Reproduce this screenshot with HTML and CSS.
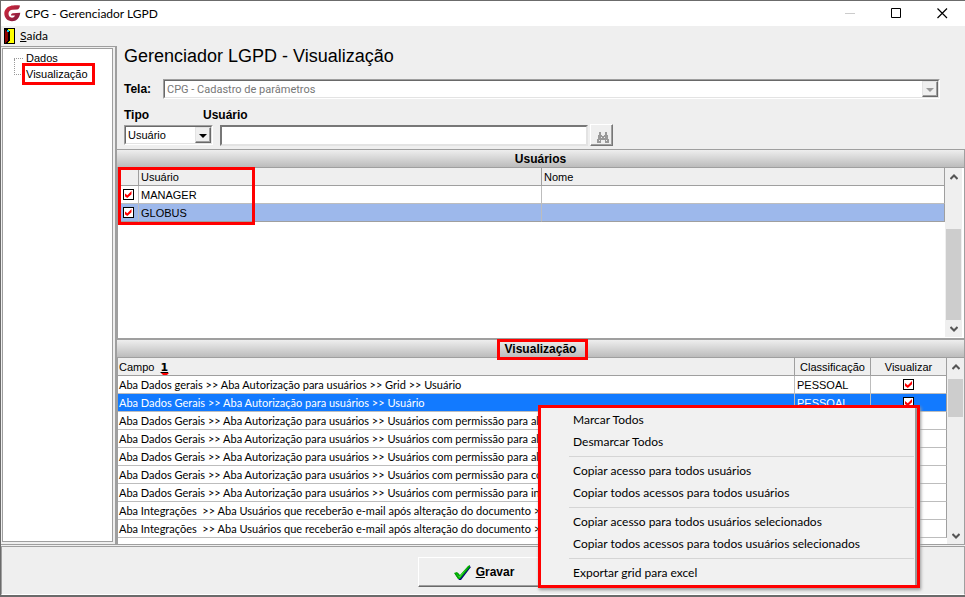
FILE: index.html
```html
<!DOCTYPE html>
<html lang="pt-BR">
<head>
<meta charset="utf-8">
<title>CPG - Gerenciador LGPD</title>
<link rel="stylesheet" href="styles.css">
</head>
<body>
<div class="window">
  <header class="titlebar">
    <svg class="logo" viewBox="0 0 17 17" aria-hidden="true">
      <defs><linearGradient id="lg" x1="0" y1="0" x2="1" y2="1"><stop offset="0" stop-color="#d8283c"/><stop offset="1" stop-color="#7c1c40"/></linearGradient></defs>
      <path fill="url(#lg)" d="M16 .5C13 .2 9 .2 6.500 .9C2.500 1.900 .3 5 .3 8.600C.3 13 3.500 16.300 8 16.300C12.500 16.300 15.600 13 16.300 7.800L8.800 8.200C7.600 8.400 7 9.400 6.900 10.600L11 10.500C10.300 12 9.300 12.700 8 12.700C5.800 12.700 4.500 11 4.500 8.800C4.500 6.300 6 4.800 8.600 4.700L13 4.600C14.800 4.300 15.700 2.700 16 .5Z"/>
    </svg>
    <h1 class="caption">CPG - Gerenciador LGPD</h1>
    <div class="controls">
      <button class="ctl" aria-label="Minimizar" disabled><svg viewBox="0 0 11 11"><path d="M0 5.500H10" stroke="#ccc"/></svg></button>
      <button class="ctl" aria-label="Maximizar"><svg viewBox="0 0 11 11"><path d="M1 1H10V10H1Z" transform="translate(-.5 -.5)" fill="none" stroke="#000"/></svg></button>
      <button class="ctl" aria-label="Fechar"><svg viewBox="0 0 11 11"><path d="M.5 .5L10 10M10 .5L.5 10" stroke="#000" stroke-width="1.200"/></svg></button>
    </div>
  </header>
  <nav class="menubar">
    <button class="exit">
      <svg class="door" viewBox="0 0 11 16" shape-rendering="crispEdges" aria-hidden="true"><path fill="#000" d="M0 0H11V16H0Z"/><path fill="#ff0" d="M3 1H10V15H3Z"/><path fill="#000" d="M1 1H3L6 4V12L3 16H1Z"/><path fill="#900000" d="M1 2L4 4V12L2 15H1Z"/><path fill="#0cf" d="M3 2H5V4H3Z"/></svg>
      <span><u>S</u>aída</span>
    </button>
  </nav>
  <div class="body">
    <aside class="side">
      <ul class="tree">
        <li><a href="#dados">Dados</a></li>
        <li><a class="marked" href="#visualizacao">Visualização</a></li>
      </ul>
    </aside>
    <main class="main">
      <section class="filters">
        <h2 class="heading">Gerenciador LGPD - Visualização</h2>
        <div class="row">
          <label class="lbl" for="tela">Tela:</label>
          <div class="combo wide">
            <select id="tela" disabled><option>CPG - Cadastro de parâmetros</option></select>
            <span class="drop"></span>
          </div>
        </div>
        <div class="fields">
          <label class="lbl" for="tipo">Tipo</label>
          <label class="lbl second" for="usuario">Usuário</label>
          <div class="combo">
            <select id="tipo"><option>Usuário</option></select>
            <span class="drop"></span>
          </div>
          <div class="search">
            <input id="usuario" type="text">
            <button class="find" aria-label="Pesquisar"><svg viewBox="0 0 12 12" shape-rendering="crispEdges"><path fill="#999" d="M2 0H4V3H5V4H7V3H8V0H10V3H11V7H12V11H8V8H4V11H0V7H1V3H2Z"/><path fill="#efefef" d="M2 8H3V9H2ZM9 8H10V9H9ZM4 5H5V6H4ZM7 5H8V6H7Z"/></svg></button>
          </div>
        </div>
      </section>
      <h3 class="band">Usuários</h3>
      <section class="pane users">
        <div class="view">
          <table class="grid">
            <colgroup><col class="c-check"><col class="c-user"><col></colgroup>
            <thead><tr><th></th><th>Usuário</th><th>Nome</th></tr></thead>
            <tbody>
              <tr><td class="mid"><input type="checkbox" aria-label="MANAGER" checked></td><td>MANAGER</td><td></td></tr>
              <tr class="soft"><td class="mid"><input type="checkbox" aria-label="GLOBUS" checked></td><td>GLOBUS</td><td></td></tr>
            </tbody>
          </table>
        </div>
        <div class="bar"><svg class="arr" viewBox="0 0 8 6"><path d="M.5 5L4 1.500L7.500 5"/></svg><span class="thumb low"></span><svg class="arr" viewBox="0 0 8 6"><path d="M.5 1L4 4.500L7.500 1"/></svg></div>
        <div class="frame"></div>
      </section>
      <h3 class="band"><span class="marked">Visualização</span></h3>
      <section class="pane access">
        <div class="view">
          <table class="grid">
            <colgroup><col><col class="c-class"><col class="c-class"></colgroup>
            <thead><tr><th>Campo <span class="sort">1</span></th><th class="mid">Classificação</th><th class="mid">Visualizar</th></tr></thead>
            <tbody>
              <tr><td>Aba Dados gerais &gt;&gt; Aba Autorização para usuários &gt;&gt; Grid &gt;&gt; Usuário</td><td>PESSOAL</td><td class="mid"><input type="checkbox" aria-label="Visualizar" checked></td></tr>
              <tr class="active"><td>Aba Dados Gerais &gt;&gt; Aba Autorização para usuários &gt;&gt; Usuário</td><td>PESSOAL</td><td class="mid"><input type="checkbox" aria-label="Visualizar" checked></td></tr>
              <tr><td>Aba Dados Gerais &gt;&gt; Aba Autorização para usuários &gt;&gt; Usuários com permissão para alt</td><td></td><td></td></tr>
              <tr><td>Aba Dados Gerais &gt;&gt; Aba Autorização para usuários &gt;&gt; Usuários com permissão para alt</td><td></td><td></td></tr>
              <tr><td>Aba Dados Gerais &gt;&gt; Aba Autorização para usuários &gt;&gt; Usuários com permissão para alt</td><td></td><td></td></tr>
              <tr><td>Aba Dados Gerais &gt;&gt; Aba Autorização para usuários &gt;&gt; Usuários com permissão para co</td><td></td><td></td></tr>
              <tr><td>Aba Dados Gerais &gt;&gt; Aba Autorização para usuários &gt;&gt; Usuários com permissão para inc</td><td></td><td></td></tr>
              <tr><td>Aba Integrações &nbsp;&gt;&gt; Aba Usuários que receberão e-mail após alteração do documento &gt;&gt;</td><td></td><td></td></tr>
              <tr><td>Aba Integrações &nbsp;&gt;&gt; Aba Usuários que receberão e-mail após alteração do documento &gt;&gt;</td><td></td><td></td></tr>
            </tbody>
          </table>
        </div>
        <div class="bar"><svg class="arr" viewBox="0 0 8 6"><path d="M.5 5L4 1.500L7.500 5"/></svg><span class="thumb"></span><svg class="arr" viewBox="0 0 8 6"><path d="M.5 1L4 4.500L7.500 1"/></svg></div>
      </section>
    </main>
  </div>
  <footer class="footer">
    <button class="save">
      <svg viewBox="0 0 17 16" aria-hidden="true"><path fill="#000080" d="M1 9L4 8L6 11L15 1L17 2L7 15H5Z"/><path fill="#00a800" d="M0 8L3 7L6 10L14 1L16 0V2L6 14H4Z"/><path fill="#3fdc3f" d="M2 8L5 11.500L14 2L6 12.500H5Z"/></svg>
      <span><u>G</u>ravar</span>
    </button>
  </footer>
  <div class="popup" role="menu">
    <button role="menuitem">Marcar Todos</button>
    <button role="menuitem">Desmarcar Todos</button>
    <hr>
    <button role="menuitem">Copiar acesso para todos usuários</button>
    <button role="menuitem">Copiar todos acessos para todos usuários</button>
    <hr>
    <button role="menuitem">Copiar acesso para todos usuários selecionados</button>
    <button role="menuitem">Copiar todos acessos para todos usuários selecionados</button>
    <hr>
    <button role="menuitem">Exportar grid para excel</button>
  </div>
</div>
</body>
</html>
```
FILE: styles.css
```css
* { box-sizing: border-box; }
body {
  margin: 0;
  font: 11px/17px "Liberation Sans", Arial, sans-serif;
  color: #000;
  background: #efefef;
}
h1, h2, h3, ul { margin: 0; padding: 0; font-weight: normal; }
button, input, select { font: inherit; color: inherit; margin: 0; border-radius: 0; }
svg { display: block; }

.window {
  position: relative;
  display: flex;
  flex-direction: column;
  height: 100vh;
  border: 1px solid #6b6b6b;
  border-right: 0;
  border-bottom-width: 2px;
}

/* Title bar */
.titlebar { display: flex; align-items: center; height: 25px; padding-left: 3px; background: #fff; }
.logo { width: 17px; height: 17px; }
.caption { flex: 1; padding-left: 4px; font: 12px/17px Lato, sans-serif; }
.controls { display: flex; }
.ctl { width: 46px; height: 25px; padding: 0; border: 0; background: none; }
.ctl svg { width: 11px; height: 11px; margin: 0 auto; }

/* Menu bar */
.menubar { height: 20px; }
.exit { display: flex; align-items: center; gap: 5px; height: 19px; padding: 0 3px; border: 0; background: none; font: 12px/17px Lato, sans-serif; }
.door { width: 11px; height: 16px; }

.body { flex: 1; display: flex; min-height: 0; }

/* Navigation tree */
.side { width: 115px; padding: 1px 2px 2px 1px; border: solid #9f9f9f; border-width: 1px 1px 1px 0; background: #efefef; }
.tree { height: 100%; padding: 1px 0 0 11px; list-style: none; border: 1px solid #9f9f9f; background: #fff; }
.tree li { position: relative; height: 16px; padding-left: 12px; line-height: 16px; }
.tree li::before { content: ""; position: absolute; left: 0; top: 8px; width: 9px; border-top: 1px dotted #999; }
.tree li + li::after { content: ""; position: absolute; left: 0; top: -7px; height: 16px; border-left: 1px dotted #999; }
.tree a { color: inherit; text-decoration: none; }
.marked { position: relative; }
.marked::after { content: ""; position: absolute; inset: -5px -7px -5px -4px; z-index: 2; border: 3px solid #f00; }

/* Filters */
.main { flex: 1; display: flex; flex-direction: column; min-width: 0; border-left: 1px solid #9f9f9f; }
.filters { height: 103px; padding-left: 7px; }
.heading { font: 18px/20px "Liberation Sans", Arial, sans-serif; }
.row { display: flex; align-items: center; margin-top: 13px; padding-right: 25px; }
.row .lbl { width: 39px; }
.lbl { font: bold 12px/16px "Liberation Sans", Arial, sans-serif; }
.combo { position: relative; height: 20px; border: 1px solid; border-color: #9f9f9f #fff #fff #9f9f9f; background: #fff; }
.combo::after { content: ""; position: absolute; inset: 0; border: 1px solid; border-color: #696969 #e3e3e3 #e3e3e3 #696969; pointer-events: none; }
.wide { flex: 1; }
.combo select { appearance: none; width: 100%; height: 18px; padding: 1px 20px 0 3px; border: 0; background: none; opacity: 1; }
.combo select:disabled { color: #777; font-family: Roboto, sans-serif; }
.drop { position: absolute; right: 1px; top: 1px; bottom: 1px; width: 16px; z-index: 1; border: 1px solid; border-color: #e3e3e3 #696969 #696969 #e3e3e3; box-shadow: inset -1px -1px #9f9f9f; background: #efefef; pointer-events: none; }
.drop::after { content: ""; position: absolute; left: 3px; top: 6px; border: 4px solid transparent; border-top-color: #000; border-bottom: 0; }
select:disabled + .drop::after { border-top-color: #999; }
.fields { display: grid; grid-template-columns: 89px 1fr; column-gap: 7px; align-items: start; margin-top: 8px; row-gap: 2px; }
.fields .second { justify-self: start; margin-left: -17px; }
.search { display: flex; gap: 2px; padding-right: 352px; }
.search input { flex: 1; min-width: 0; height: 21px; border: 2px solid; border-color: #777 #e3e3e3 #e3e3e3 #777; background: #fff; }
.find { width: 23px; height: 22px; margin-top: -1px; padding: 6px 0 0 6px; border: 1px solid; border-color: #fff #777 #777 #fff; box-shadow: inset -1px -1px #9f9f9f; background: #efefef; }
.find svg { width: 12px; height: 12px; }

/* Grids */
.band { flex: none; height: 19px; border: solid #9f9f9f; border-width: 1px 1px 1px 0; background: linear-gradient(#eee, #bcbcbc); font: bold 12px/18px "Liberation Sans", Arial, sans-serif; text-align: center; }
.band .marked::after { inset: -3px -12px -4px -8px; }
.pane { display: flex; min-height: 0; background: #fff; border: solid #9f9f9f; border-width: 0 1px; }
.users { position: relative; flex: none; height: 171px; padding: 0 2px 1px 0; border-bottom-width: 1px; }
.access { flex: 1; border-bottom-width: 1px; }
.view { flex: 1; min-width: 0; overflow: hidden; }
.grid { width: 100%; table-layout: fixed; border-spacing: 0; }
.c-check { width: 21px; }
.c-user { width: 403px; }
.c-class { width: 76px; }
.grid th, .grid td { height: 18px; padding: 1px 2px 0; border: solid #bdbdbd; border-width: 0 1px 1px 0; font-weight: normal; text-align: left; white-space: nowrap; overflow: hidden; line-height: 16px; }
.access th:first-child, .access td:first-child { padding-left: 1px; }
.access td:first-child { font-family: Lato, sans-serif; }
.grid th { border-color: #9f9f9f; background: #efefef; }
.grid .mid { padding: 1px 0 0; text-align: center; }
.grid td.mid { padding: 0; }
.grid td:last-child { border-right-color: #9f9f9f; }
.soft td { background: #9db8eb; border-color: #bdbdbd #bdbdbd #9f9f9f; }
.active td { background: #127aff; color: #fff; }
.grid input { appearance: none; display: block; width: 11px; height: 11px; margin: 0 auto; border: 1px solid #000; background: #fff; }
.grid input::before { content: ""; display: block; width: 7px; height: 7px; margin: 1px; background: #f00; clip-path: polygon(0 30%, 40% 62%, 100% 0, 100% 45%, 40% 100%, 0 70%); }
.sort { position: relative; margin-left: 3px; font: bold 11px/14px "DejaVu Sans", sans-serif; text-decoration: underline; }
.sort::after { content: ""; position: absolute; left: 0; bottom: -3px; border: 4px solid transparent; border-top-color: #f00; border-bottom: 0; }
.frame { position: absolute; left: 0; top: -1px; width: 137px; height: 58px; border: 3px solid #f00; pointer-events: none; }

/* Scroll bars */
.bar { display: flex; flex-direction: column; flex: none; align-items: center; width: 17px; padding: 6px 0 5px; background: #efefef; }
.arr { width: 8px; height: 6px; fill: none; stroke: #555; stroke-width: 2; }
.thumb { width: 15px; height: 38px; margin: 9px 0 auto; background: #cdcdcd; }
.low { height: 91px; margin: auto 0 6px; }

/* Footer */
.footer { flex: none; height: 49px; margin-top: 1px; padding: 10px 0 0 416px; border: 1px solid #9f9f9f; border-bottom-color: #fff; }
.save { display: flex; align-items: center; justify-content: center; gap: 5px; width: 132px; height: 30px; padding: 1px 0 0; border: 1px solid; border-color: #fff #696969 #696969 #fff; box-shadow: inset -1px -1px #9f9f9f; background: #efefef; font: bold 12px/17px "Liberation Sans", Arial, sans-serif; }
.save svg { width: 17px; height: 16px; }

/* Context menu */
.popup { position: absolute; right: 45px; bottom: 7px; z-index: 3; width: 382px; padding: 1px 3px 1px 28px; border: 3px solid #f00; background: #f1f1f1; box-shadow: inset -2px 0 #999, 1px 2px 3px #999; }
.popup button { display: block; width: 100%; height: 22px; padding: 0 4px; border: 0; background: none; font: 12px/22px Lato, sans-serif; text-align: left; white-space: nowrap; }
.popup hr { height: 1px; margin: 3px 0; border: 0; background: #d5d5d5; }
```
